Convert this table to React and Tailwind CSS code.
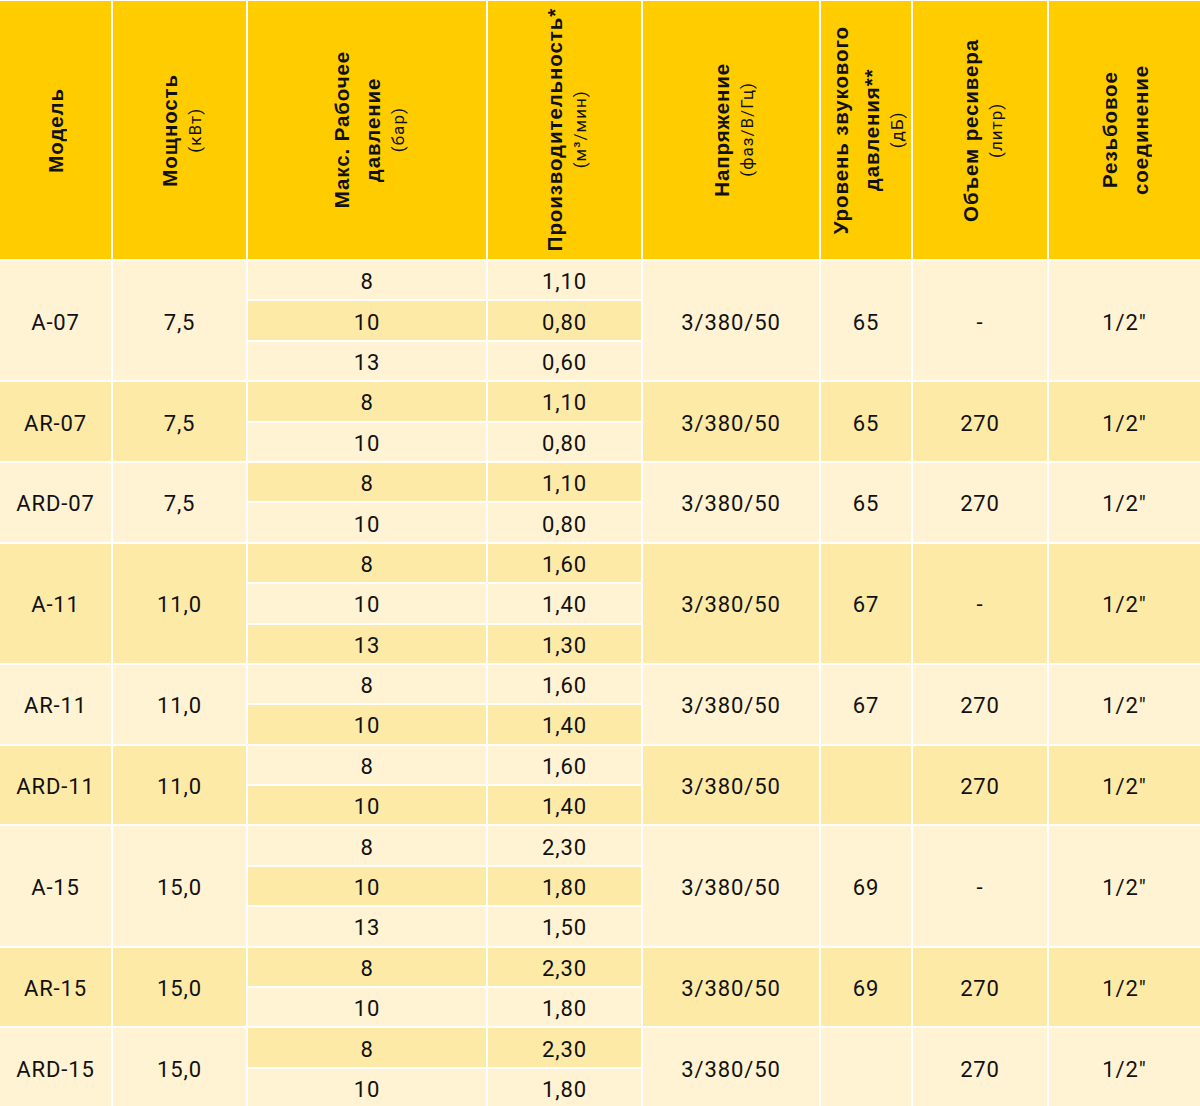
import React from "react";

const LIGHT = "bg-[#fff3d3]";
const DARK = "bg-[#feeaa7]";

const groups = [
  { model: "A-07", power: "7,5", rows: [["8", "1,10"], ["10", "0,80"], ["13", "0,60"]], volt: "3/380/50", db: "65", vol: "-", thread: "1/2\"" },
  { model: "AR-07", power: "7,5", rows: [["8", "1,10"], ["10", "0,80"]], volt: "3/380/50", db: "65", vol: "270", thread: "1/2\"" },
  { model: "ARD-07", power: "7,5", rows: [["8", "1,10"], ["10", "0,80"]], volt: "3/380/50", db: "65", vol: "270", thread: "1/2\"" },
  { model: "A-11", power: "11,0", rows: [["8", "1,60"], ["10", "1,40"], ["13", "1,30"]], volt: "3/380/50", db: "67", vol: "-", thread: "1/2\"" },
  { model: "AR-11", power: "11,0", rows: [["8", "1,60"], ["10", "1,40"]], volt: "3/380/50", db: "67", vol: "270", thread: "1/2\"" },
  { model: "ARD-11", power: "11,0", rows: [["8", "1,60"], ["10", "1,40"]], volt: "3/380/50", db: "", vol: "270", thread: "1/2\"" },
  { model: "A-15", power: "15,0", rows: [["8", "2,30"], ["10", "1,80"], ["13", "1,50"]], volt: "3/380/50", db: "69", vol: "-", thread: "1/2\"" },
  { model: "AR-15", power: "15,0", rows: [["8", "2,30"], ["10", "1,80"]], volt: "3/380/50", db: "69", vol: "270", thread: "1/2\"" },
  { model: "ARD-15", power: "15,0", rows: [["8", "2,30"], ["10", "1,80"]], volt: "3/380/50", db: "", vol: "270", thread: "1/2\"" },
];

const headers = [
  { title: ["Модель"] },
  { title: ["Мощность"], unit: "(кВт)" },
  { title: ["Макс. Рабочее", "давление"], unit: "(бар)" },
  { title: ["Производительность*"], unit: "(м³/мин)" },
  { title: ["Напряжение"], unit: "(фаз/В/Гц)" },
  { title: ["Уровень звукового", "давления**"], unit: "(дБ)" },
  { title: ["Объем ресивера"], unit: "(литр)" },
  { title: ["Резьбовое", "соединение"] },
];

function HeaderCell({ title, unit }) {
  return (
    <div className="flex items-center justify-center bg-[#ffcc00] text-[#111]">
      <div className="[writing-mode:vertical-rl] rotate-180 text-center">
        <div className="font-bold text-[20.5px] leading-[31px] [font-family:'Liberation_Sans',Arial,sans-serif]">
          {title.map((t, i) => (
            <div key={i}>{t}</div>
          ))}
        </div>
        {unit && (
          <div className="text-[17px] leading-[20px] tracking-[0.06em] [font-family:Roboto,sans-serif]">
            {unit}
          </div>
        )}
      </div>
    </div>
  );
}

function Cell({ children, bg, span }) {
  const spanClass = span === 3 ? "row-span-3" : span === 2 ? "row-span-2" : "";
  return (
    <div className={`flex items-center justify-center pt-[3px] ${bg} ${spanClass}`}>
      {children}
    </div>
  );
}

export default function App() {
  let sub = 0;
  return (
    <div className="w-[1200px] bg-white pt-[1px]">
      <div className="grid grid-cols-[111px_133px_238px_153px_176px_90px_134px_151px] grid-rows-[258px_repeat(21,38.4px)] gap-[2px] text-[22px] tracking-[0.04em] text-[#111] [font-family:Roboto,sans-serif]">
        {headers.map((h, i) => (
          <HeaderCell key={i} {...h} />
        ))}
        {groups.map((g, gi) => {
          const bg = gi % 2 === 0 ? LIGHT : DARK;
          const n = g.rows.length;
          const cells = [];
          g.rows.forEach((r, ri) => {
            const rowBg = sub % 2 === 0 ? LIGHT : DARK;
            sub++;
            if (ri === 0) {
              cells.push(
                <Cell key="m" bg={bg} span={n}>{g.model}</Cell>,
                <Cell key="p" bg={bg} span={n}>{g.power}</Cell>,
                <Cell key="r0" bg={rowBg}>{r[0]}</Cell>,
                <Cell key="q0" bg={rowBg}>{r[1]}</Cell>,
                <Cell key="v" bg={bg} span={n}>{g.volt}</Cell>,
                <Cell key="d" bg={bg} span={n}>{g.db}</Cell>,
                <Cell key="o" bg={bg} span={n}>{g.vol}</Cell>,
                <Cell key="t" bg={bg} span={n}>{g.thread}</Cell>
              );
            } else {
              cells.push(
                <Cell key={`r${ri}`} bg={rowBg}>{r[0]}</Cell>,
                <Cell key={`q${ri}`} bg={rowBg}>{r[1]}</Cell>
              );
            }
          });
          return <React.Fragment key={g.model}>{cells}</React.Fragment>;
        })}
      </div>
    </div>
  );
}
